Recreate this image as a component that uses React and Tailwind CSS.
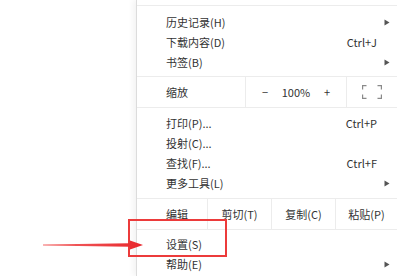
import React from 'react';

const font = { fontFamily: '"Noto Sans CJK SC", "Noto Sans", sans-serif' };

function Arrow() {
    return (
        <span className="w-[20px] flex justify-center">
            <svg width="6" height="7" viewBox="0 0 6 7">
                <path d="M0.5 0.5 L5.5 3.5 L0.5 6.5 Z" fill="#555" />
            </svg>
        </span>
    );
}

function Item({ label, shortcut, sub }) {
    return (
        <div className="h-[20px] flex items-center pl-[29px]">
            <span className="flex-1">{label}</span>
            {shortcut && <span>{shortcut}</span>}
            {sub ? <Arrow /> : <span className="w-[20px]" />}
        </div>
    );
}

function Sep() {
    return <div className="h-px bg-[#ececec]" />;
}

function FullscreenIcon() {
    return (
        <svg width="20" height="14" viewBox="0 0 20 14" fill="none" stroke="#8a8a8a" strokeWidth="1.2">
            <path d="M0.6 4.5 V0.6 H4.5" />
            <path d="M15.5 0.6 H19.4 V4.5" />
            <path d="M19.4 9.5 V13.4 H15.5" />
            <path d="M4.5 13.4 H0.6 V9.5" />
        </svg>
    );
}

export default function App() {
    return (
        <div className="relative w-[397px] h-[276px] bg-white overflow-hidden flex text-[11px] text-[#333]" style={font}>
            <div className="w-[136px] shrink-0" />
            <div className="flex-1 flex flex-col border-l border-[#dcdcdc] shadow-[-3px_0_6px_rgba(0,0,0,0.05)]">
                <div className="h-[5px]" />
                <Sep />
                <div className="pt-[6px] pb-[4px]">
                    <Item label="历史记录(H)" sub />
                    <Item label="下载内容(D)" shortcut="Ctrl+J" />
                    <Item label="书签(B)" sub />
                </div>
                <Sep />
                <div className="h-[30px] flex">
                    <div className="w-[109px] flex items-center pl-[29px] border-r border-[#ececec]">缩放</div>
                    <div className="w-[101px] flex items-center justify-between px-[16px] border-r border-[#ececec]">
                        <span>−</span>
                        <span>100%</span>
                        <span>+</span>
                    </div>
                    <div className="flex-1 flex items-center justify-center">
                        <FullscreenIcon />
                    </div>
                </div>
                <Sep />
                <div className="pt-[5px] pb-[5px]">
                    <Item label="打印(P)..." shortcut="Ctrl+P" />
                    <Item label="投射(C)..." />
                    <Item label="查找(F)..." shortcut="Ctrl+F" />
                    <Item label="更多工具(L)" sub />
                </div>
                <Sep />
                <div className="h-[30px] flex">
                    <div className="w-[71px] flex items-center pl-[29px] border-r border-[#ececec]">编辑</div>
                    <div className="w-[64px] flex items-center justify-center border-r border-[#ececec]">剪切(T)</div>
                    <div className="w-[64px] flex items-center justify-center border-r border-[#ececec]">复制(C)</div>
                    <div className="flex-1 flex items-center justify-center">粘贴(P)</div>
                </div>
                <Sep />
                <div className="pt-[4px]">
                    <Item label="设置(S)" />
                    <Item label="帮助(E)" sub />
                </div>
            </div>

            <div className="absolute left-[128px] top-[219px] w-[99px] h-[38px] border-2 border-[#ec3b3b]" />
            <svg className="absolute left-[40px] top-[238px]" width="106" height="14" viewBox="0 0 106 14">
                <defs>
                    <linearGradient id="ar" x1="0" x2="1" y1="0" y2="0">
                        <stop offset="0" stopColor="#f36a6a" />
                        <stop offset="1" stopColor="#e8262b" />
                    </linearGradient>
                </defs>
                <path d="M3 6.5 L90 5.2 L90 2.5 L103 7 L90 11.5 L90 8.8 L3 7.5 Z" fill="url(#ar)" />
            </svg>
        </div>
    );
}
